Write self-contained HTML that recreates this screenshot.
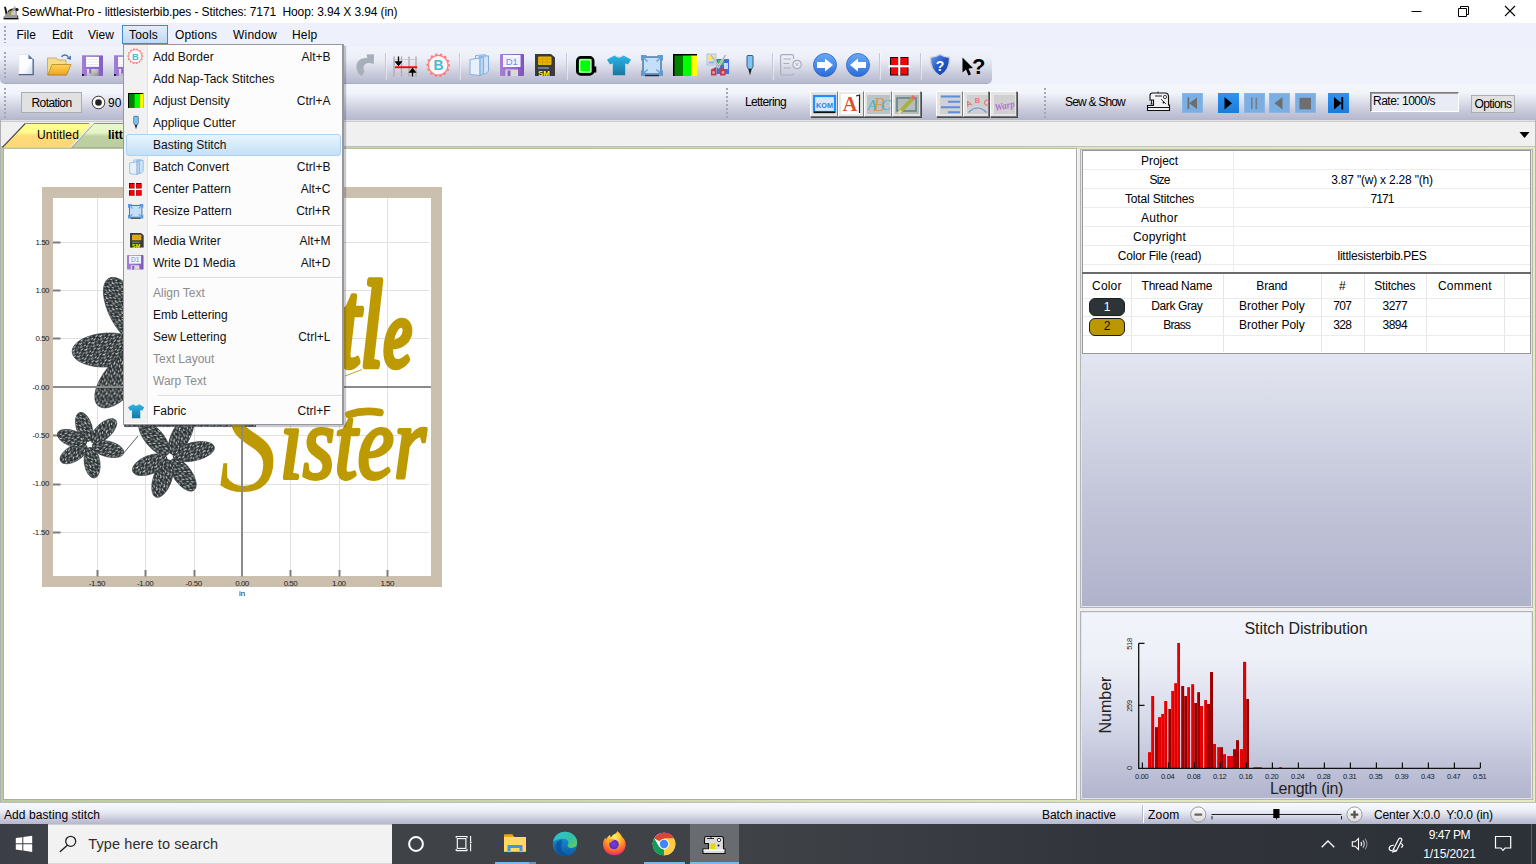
<!DOCTYPE html>
<html><head><meta charset="utf-8"><title>SewWhat-Pro</title>
<style>
*{box-sizing:border-box;margin:0;padding:0}
html,body{width:1536px;height:864px;overflow:hidden;background:#fff}
body{position:relative;font-family:"Liberation Sans",sans-serif;font-size:12px;color:#000}
.a{position:absolute}
.t{position:absolute;white-space:pre}
svg{overflow:visible}
</style></head><body>
<div class="a" style="left:0px;top:0px;width:1536px;height:23px;background:#fff"></div>
<div class="t" style="left:21.50px;letter-spacing:-0.111px;top:3.50px;font-size:12px;line-height:16px;color:#000;">SewWhat-Pro - littlesisterbib.pes - Stitches: 7171  Hoop: 3.94 X 3.94 (in)</div>
<svg class="a" style="left:2.5px;top:6px;" width="15.5" height="13.5" viewBox="0 0 15.5 13.5" preserveAspectRatio="none"><path d="M1.5 1.5Q1.5 .5 3 .8L4.5 6L9 2.5Q12 .5 14 2.500V9.500H15V12H.5V10.500L2.500 9z" fill="#9a9a9a"/><path d="M1.200 1.200Q1.800 0 2.800 1L4.200 7L2.800 8.500z" fill="#111"/><path d="M4.500 5.500Q7 2 10 3L6.500 6.500z" fill="#222"/><circle cx="14" cy="3.500" r="1.600" fill="#111"/><circle cx="11.800" cy="1" r=".9" fill="#bbb"/><rect x="6" y="4.800" width="2.500" height="3.500" fill="#a8a000"/><path d="M8.500 5.500L12.500 4.500V9H8z" fill="#c9c9c9"/><rect x=".5" y="12" width="15" height="1.400" fill="#111"/><rect x="14" y="9.500" width="1.200" height="3" fill="#444"/></svg>
<svg class="a" style="left:1400px;top:0px;" width="136" height="23" viewBox="0 0 136 23" preserveAspectRatio="none"><path d="M11.5 11.5h10" stroke="#000" stroke-width="1" fill="none"/><path d="M58.5 8.5h8v8h-8z M60.5 8.5v-2h8v8h-2" stroke="#000" stroke-width="1" fill="none"/><path d="M105 6l10 10M115 6l-10 10" stroke="#000" stroke-width="1.1" fill="none"/></svg>
<div class="a" style="left:0px;top:23px;width:1536px;height:24px;background:#eef0fb"></div>
<div class="a" style="left:4px;top:26px;width:2px;height:17px;background:repeating-linear-gradient(#a4a7b9 0,#a4a7b9 2px,transparent 2px,transparent 4px)"></div>
<div class="a" style="left:122px;top:25px;width:46px;height:19px;border:1px solid #3c8ad8;background:linear-gradient(#e4eefa,#bfd8f2)"></div>
<div class="t" style="left:16.50px;letter-spacing:0.039px;top:26.50px;font-size:12px;line-height:16px;color:#000;">File</div>
<div class="t" style="left:52.00px;letter-spacing:0.078px;top:26.50px;font-size:12px;line-height:16px;color:#000;">Edit</div>
<div class="t" style="left:88.00px;letter-spacing:0.051px;top:26.50px;font-size:12px;line-height:16px;color:#000;">View</div>
<div class="t" style="left:129.00px;letter-spacing:0.197px;top:26.50px;font-size:12px;line-height:16px;color:#000;">Tools</div>
<div class="t" style="left:175.00px;letter-spacing:0.092px;top:26.50px;font-size:12px;line-height:16px;color:#000;">Options</div>
<div class="t" style="left:233.00px;letter-spacing:0.219px;top:26.50px;font-size:12px;line-height:16px;color:#000;">Window</div>
<div class="t" style="left:292.00px;letter-spacing:0.203px;top:26.50px;font-size:12px;line-height:16px;color:#000;">Help</div>
<div class="a" style="left:0px;top:47px;width:1536px;height:37px;background:#eff1fb"></div>
<div class="a" style="left:0px;top:47px;width:992px;height:37px;border-radius:0 0 5px 5px;background:linear-gradient(#f2f4fc 0%,#eceef8 30%,#d9dbe8 55%,#c3c5d8 80%,#b7b9d0 96%,#a4a7bf 100%)"></div>
<div class="a" style="left:4px;top:52px;width:2px;height:26px;background:repeating-linear-gradient(#a4a7b9 0,#a4a7b9 2px,transparent 2px,transparent 4px)"></div>
<div class="a" style="left:0px;top:84px;width:1536px;height:36px;background:linear-gradient(#f4f6fc 0%,#f2f4fb 25%,#dfe1ec 47%,#c6c8da 75%,#b5b7cf 100%)"></div>
<div class="a" style="left:4px;top:88px;width:2px;height:30px;background:repeating-linear-gradient(#a4a7b9 0,#a4a7b9 2px,transparent 2px,transparent 4px)"></div>
<div class="a" style="left:726px;top:88px;width:2px;height:30px;background:repeating-linear-gradient(#a4a7b9 0,#a4a7b9 2px,transparent 2px,transparent 4px)"></div>
<div class="a" style="left:1044px;top:88px;width:2px;height:30px;background:repeating-linear-gradient(#a4a7b9 0,#a4a7b9 2px,transparent 2px,transparent 4px)"></div>
<div class="a" style="left:21px;top:92px;width:61px;height:21px;background:#e1e1e1;border:1px solid #adadad"></div>
<div class="t" style="left:31.50px;letter-spacing:-0.588px;top:94.50px;font-size:12px;line-height:16px;color:#000;">Rotation</div>
<svg class="a" style="left:91px;top:95px;" width="15" height="15" viewBox="0 0 15 15" preserveAspectRatio="none"><circle cx="7.5" cy="7.5" r="6.3" fill="#fff" stroke="#333" stroke-width="1"/><circle cx="7.5" cy="7.5" r="3.3" fill="#222"/></svg>
<div class="t" style="left:108.00px;top:94.50px;font-size:12px;line-height:16px;color:#000;">90</div>
<div class="t" style="left:745.00px;letter-spacing:-0.634px;top:94.00px;font-size:12px;line-height:16px;color:#000;">Lettering</div>
<div class="t" style="left:1065.00px;letter-spacing:-0.805px;top:94.00px;font-size:12px;line-height:16px;color:#000;">Sew &amp; Show</div>
<div class="a" style="left:1370px;top:92px;width:89px;height:20px;background:#e9ecf5;border:1px solid;border-color:#7a7a7a #fff #fff #7a7a7a;box-shadow:inset 1px 1px 0 #a0a0a0"></div>
<div class="t" style="left:1373.00px;letter-spacing:-0.504px;top:93.00px;font-size:12px;line-height:16px;color:#000;">Rate: 1000/s</div>
<div class="a" style="left:1471px;top:95px;width:44px;height:18px;background:#e1e1e1;border:1px solid #adadad"></div>
<div class="t" style="left:1474.50px;letter-spacing:-0.623px;top:96.00px;font-size:12px;line-height:16px;color:#000;">Options</div>
<div class="a" style="left:0px;top:120px;width:1536px;height:27px;background:#f0f0f0"></div>
<div class="a" style="left:0px;top:120px;width:1536px;height:1px;background:#e2e2e6"></div>
<div class="a" style="left:0px;top:121px;width:1536px;height:1px;background:#cbcbcb"></div>
<div class="a" style="left:0px;top:146px;width:1536px;height:657px;background:linear-gradient(90deg,#bccaa0 0%,#c6d4a8 30%,#dfe7bb 75%,#e4ecc0 100%)"></div>
<div class="a" style="left:0px;top:146px;width:1536px;height:1px;background:#bdbdbd"></div>
<div class="a" style="left:1078px;top:146px;width:458px;height:1px;background:#c4c4c4"></div>
<div class="a" style="left:0px;top:120px;width:1px;height:683px;background:#b0b0b0"></div>
<div class="a" style="left:1535px;top:120px;width:1px;height:683px;background:#b4b4b0"></div>
<div class="a" style="left:0px;top:802px;width:1536px;height:1px;background:#bdbdbd"></div>
<div class="a" style="left:3px;top:149px;width:1530px;height:651px;background:#f0f0f0"></div>
<svg class="a" style="left:0px;top:120px;" width="400" height="28" viewBox="0 0 400 28" preserveAspectRatio="none"><defs><linearGradient id="gy" x1="0" y1="0" x2="0" y2="1"><stop offset="0" stop-color="#ffff92"/><stop offset=".36" stop-color="#fffb8c"/><stop offset=".52" stop-color="#ffdb79"/><stop offset="1" stop-color="#ffd777"/></linearGradient><linearGradient id="gg" x1="0" y1="0" x2="0" y2="1"><stop offset="0" stop-color="#eaf9cc"/><stop offset=".38" stop-color="#e4f4c6"/><stop offset=".52" stop-color="#bfd0a2"/><stop offset="1" stop-color="#bccda0"/></linearGradient></defs><path d="M71.500 28 L94 3.500 L230 3.500 L250 28 Z" fill="url(#gg)" stroke="#9a9a9a" stroke-width="1"/><path d="M2.300 27.500 L25.300 3.500 L91.500 3.500 L70.500 27.500 Z" fill="url(#gy)"/><path d="M2.300 27.500 L25.300 3.500" stroke="#4c4c4c" stroke-width="1.100" fill="none"/><path d="M25 3.500H232" stroke="#8d8d8d" stroke-width="1" fill="none"/><path d="M92.500 3.500L70.500 27.500" stroke="#f4f4f4" stroke-width="1" fill="none"/><path d="M88.700 3L91.500 6L94.200 3z" fill="#f0f0f0"/></svg>
<div class="t" style="left:37.00px;letter-spacing:0.164px;top:127.00px;font-size:12px;line-height:16px;color:#000;">Untitled</div>
<div class="t" style="left:108.00px;top:127.00px;font-size:12px;line-height:16px;color:#000;font-weight:bold;">littlesisterbib.pes</div>
<svg class="a" style="left:1519px;top:131px;" width="11" height="8" viewBox="0 0 11 8" preserveAspectRatio="none"><path d="M0.5 1h10l-5 6z" fill="#000"/></svg>
<div class="a" style="left:3px;top:148px;width:1074px;height:652px;background:#fff;border:1px solid #ababab;border-top-color:#b5c4a0"></div>
<div class="a" style="left:0px;top:803px;width:1536px;height:21px;background:linear-gradient(#f6f8fd 0%,#f0f2fa 30%,#d9dbe8 60%,#c0c2d6 85%,#b5b7cf 100%)"></div>
<div class="t" style="left:4.00px;letter-spacing:0.070px;top:807.00px;font-size:12px;line-height:16px;color:#000;">Add basting stitch</div>
<div class="t" style="left:1042.00px;letter-spacing:-0.051px;top:807.00px;font-size:12px;line-height:16px;color:#000;">Batch inactive</div>
<div class="a" style="left:1143px;top:805px;width:1px;height:18px;background:#fff;box-shadow:-1px 0 0 #b5b8cc"></div>
<div class="t" style="left:1148.00px;letter-spacing:0.203px;top:807.00px;font-size:12px;line-height:16px;color:#000;">Zoom</div>
<div class="t" style="left:1374.00px;letter-spacing:-0.119px;top:807.00px;font-size:12px;line-height:16px;color:#000;">Center X:0.0  Y:0.0 (in)</div>
<svg class="a" style="left:1188px;top:804px;" width="180" height="21" viewBox="0 0 180 21" preserveAspectRatio="none"><defs><linearGradient id="zb" x1="0" y1="0" x2="0" y2="1"><stop offset="0" stop-color="#fff"/><stop offset="1" stop-color="#d8d8d8"/></linearGradient></defs><circle cx="10.3" cy="10.5" r="7.6" fill="url(#zb)" stroke="#9a9a9a" stroke-width="1"/><rect x="6.3" y="9.4" width="8" height="2.4" rx="1" fill="#666"/><circle cx="166.5" cy="10.5" r="7.6" fill="url(#zb)" stroke="#9a9a9a" stroke-width="1"/><rect x="162.5" y="9.4" width="8" height="2.4" rx="1" fill="#555"/><rect x="165.3" y="6.5" width="2.4" height="8" rx="1" fill="#555"/><path d="M23.5 10.500h130" stroke="#222" stroke-width="1"/><path d="M24 12v3.5M88.5 12v3.5M153.5 12v3.5" stroke="#222" stroke-width="1"/><rect x="85.3" y="5" width="6.2" height="9" fill="#000"/></svg>
<svg class="a" style="left:18px;top:54px;" width="16" height="21" viewBox="0 0 16 21" preserveAspectRatio="none"><defs><linearGradient id="nd" x1="0" y1="0" x2="1" y2="1"><stop offset="0" stop-color="#fff"/><stop offset=".6" stop-color="#fafbfe"/><stop offset="1" stop-color="#c9d5ea"/></linearGradient></defs><path d="M.8 .5H10.500L15 5V20.300H.8z" fill="url(#nd)" stroke="#d5dbe8" stroke-width=".6"/><path d="M15.200 5V20.600H.8" fill="none" stroke="#4c6488" stroke-width="1.300"/><path d="M10.500 .5V5H15z" fill="#5d7599"/></svg>
<svg class="a" style="left:47px;top:54px;" width="24" height="21" viewBox="0 0 24 21" preserveAspectRatio="none"><defs><linearGradient id="of" x1="0" y1="0" x2="0" y2="1"><stop offset="0" stop-color="#ffd35a"/><stop offset="1" stop-color="#f0a31d"/></linearGradient></defs><path d="M.5 4H9.500L11 6H19V21H.5z" fill="#f6dc85" stroke="#b9a36a" stroke-width=".8"/><path d="M5 10.500H24L19.500 21H.8z" fill="url(#of)" stroke="#a87c1b" stroke-width=".7"/><path d="M14.500 3C16 .3 20 .3 21.500 3.500" fill="none" stroke="#4f7ab0" stroke-width="1.400"/><path d="M19.500 4.500L24 1.500V6z" fill="#4f7ab0"/></svg>
<svg class="a" style="left:82px;top:55px;" width="21" height="21" viewBox="0 0 21 21" preserveAspectRatio="none"><defs><linearGradient id="pf2" x1="0" y1="0" x2="1" y2="0"><stop offset="0" stop-color="#a07fd6"/><stop offset=".5" stop-color="#8f6bcb"/><stop offset="1" stop-color="#8261c2"/></linearGradient><linearGradient id="mt" x1="0" y1="0" x2="1" y2="1"><stop offset="0" stop-color="#f2f2f2"/><stop offset="1" stop-color="#8e8e8e"/></linearGradient></defs><rect x="0" y="0" width="21" height="21" rx=".8" fill="url(#pf2)"/><rect x="0" y="0" width="21" height="1" fill="#b79ce2"/><rect x="4" y="1.800" width="13" height="10" fill="#fff"/><path d="M4 4.500H17M4 7H17M4 9.500H17" stroke="#dcdcdc" stroke-width=".6"/><rect x="5" y="14" width="11.500" height="7" fill="url(#mt)"/><rect x="7.200" y="14" width="2.200" height="4.500" fill="#8a66c8"/><rect x="0" y="19" width="2" height="2" fill="#222"/></svg>
<svg class="a" style="left:114px;top:55px;" width="21" height="21" viewBox="0 0 21 21" preserveAspectRatio="none"><defs><linearGradient id="pf2" x1="0" y1="0" x2="1" y2="0"><stop offset="0" stop-color="#a07fd6"/><stop offset=".5" stop-color="#8f6bcb"/><stop offset="1" stop-color="#8261c2"/></linearGradient><linearGradient id="mt" x1="0" y1="0" x2="1" y2="1"><stop offset="0" stop-color="#f2f2f2"/><stop offset="1" stop-color="#8e8e8e"/></linearGradient></defs><rect x="0" y="0" width="21" height="21" rx=".8" fill="url(#pf2)"/><rect x="0" y="0" width="21" height="1" fill="#b79ce2"/><rect x="4" y="1.800" width="13" height="10" fill="#fff"/><path d="M4 4.500H17M4 7H17M4 9.500H17" stroke="#dcdcdc" stroke-width=".6"/><rect x="5" y="14" width="11.500" height="7" fill="url(#mt)"/><rect x="7.200" y="14" width="2.200" height="4.500" fill="#8a66c8"/><rect x="0" y="19" width="2" height="2" fill="#222"/></svg>
<svg class="a" style="left:354px;top:54px;" width="20" height="22" viewBox="0 0 20 21" preserveAspectRatio="none"><path d="M12.500 .500L20 .300L19.800 9.500L16.500 8.800C11 7.500 8 11.500 10.500 17L7.500 21C-1 14.500 1.500 3 13.300 3.800z" fill="#a9aebb"/></svg>
<div class="a" style="left:384.5px;top:53px;width:1px;height:27px;background:#c6c8d8"></div>
<div class="a" style="left:385.5px;top:53px;width:1px;height:27px;background:rgba(255,255,255,.45)"></div>
<svg class="a" style="left:393px;top:55.5px;" width="24" height="21" viewBox="0 0 24 21" preserveAspectRatio="none"><path d="M1 .5V20.500M8.500 .5V20.500M16 .5V20.500M23 .5V20.500" stroke="#a8a8a8" stroke-width="1.300"/><path d="M1 3.500H23M1 17.500H23" stroke="#c4c4c4" stroke-width=".8"/><rect x="2" y="10.300" width="22" height="1.900" fill="#ff0000"/><path d="M5.500 .5V6M2.800 6H8.200L5.500 9.300zM19.500 20.500V16M16.800 16H22.200L19.500 12.700z" stroke="#000" stroke-width="1.300" fill="#000"/></svg>
<svg class="a" style="left:426px;top:53px;" width="24.5" height="24.5" viewBox="0 0 24 24" preserveAspectRatio="none"><circle cx="12" cy="12" r="10.400" fill="none" stroke="#f78383" stroke-width="2.600" stroke-linecap="round" stroke-dasharray="0.100 4.570"/><circle cx="12" cy="12" r="9.600" fill="#fbf6f8" stroke="#f78383" stroke-width="1.300"/><text x="12.200" y="17" font-family="'Liberation Sans',sans-serif" font-weight="bold" font-size="13.500" text-anchor="middle" fill="#3fbfd2">B</text></svg>
<div class="a" style="left:458.5px;top:53px;width:1px;height:27px;background:#c6c8d8"></div>
<div class="a" style="left:459.5px;top:53px;width:1px;height:27px;background:rgba(255,255,255,.45)"></div>
<svg class="a" style="left:469px;top:54px;" width="20" height="22" viewBox="0 0 20 22" preserveAspectRatio="none"><g stroke="#7aa7d9" stroke-width=".9"><path d="M6.500 1.500L16.500 .8V18L6.500 18.800z" fill="#dfeefb"/><path d="M10 2.500L19.500 1.800V17L16.500 20L10 19.500z" fill="#cfe4f8"/><path d="M1 5.500L11 4V21.500L1 20.500z" fill="#e6f1fc"/><path d="M11 4L14.500 3V19.500L11 21.500z" fill="#b8d4f0"/></g></svg>
<svg class="a" style="left:500px;top:54px;" width="24" height="22" viewBox="0 0 24 22" preserveAspectRatio="none"><defs><linearGradient id="pf" x1="0" y1="0" x2="1" y2="0"><stop offset="0" stop-color="#a47fd6"/><stop offset=".5" stop-color="#9a6ccf"/><stop offset="1" stop-color="#7e54b8"/></linearGradient></defs><rect x="0" y="0" width="24" height="22" rx="1" fill="url(#pf)"/><rect x="3" y="1" width="17.500" height="12" fill="#f6f8ff"/><path d="M3 4H20.500M3 7H20.500M3 10H20.500" stroke="#d5daf0" stroke-width=".6"/><text x="11.800" y="10.500" font-family="'Liberation Sans',sans-serif" font-size="9.500" text-anchor="middle" fill="#6f90d8">D1</text><rect x="5.500" y="15.500" width="12.500" height="6.500" fill="#d9d9d9"/><rect x="7.500" y="16.500" width="3" height="5.500" fill="#8b62c4"/></svg>
<svg class="a" style="left:535px;top:54px;" width="20" height="22" viewBox="0 0 20 22" preserveAspectRatio="none"><path d="M0 0H16L20 3.500V22H0z" fill="#3b3b3b"/><rect x="3" y="2.500" width="13.500" height="8.500" rx="1" fill="#e9b500"/><path d="M3 5.300H16.500M3 8.200H16.500M7.500 2.500V11M12 2.500V11" stroke="#c99700" stroke-width=".7"/><rect x="3" y="13" width="11" height="2" fill="#6a7c90"/><rect x="2" y="17" width="14" height="5" fill="#2a2a2a"/><text x="9" y="22" font-family="'Liberation Sans',sans-serif" font-weight="bold" font-size="7" text-anchor="middle" fill="#ffff00" textLength="12" lengthAdjust="spacingAndGlyphs">SM</text></svg>
<div class="a" style="left:565.5px;top:53px;width:1px;height:27px;background:#c6c8d8"></div>
<div class="a" style="left:566.5px;top:53px;width:1px;height:27px;background:rgba(255,255,255,.45)"></div>
<svg class="a" style="left:576px;top:55.6px;" width="20.3" height="19.8" viewBox="0 0 20.3 19.8" preserveAspectRatio="none"><rect x="1.400" y="1.400" width="15.700" height="17" rx="3.500" fill="#00ff00" stroke="#000" stroke-width="2.800"/><rect x="3.800" y="3.800" width="11" height="12.200" fill="none" stroke="#fff" stroke-width="1"/><rect x="17" y="10.500" width="3.300" height="6" fill="#000"/></svg>
<svg class="a" style="left:607px;top:55px;" width="24" height="20.5" viewBox="0 0 24 20.5" preserveAspectRatio="none"><defs><linearGradient id="ts" x1="0" y1="0" x2="0" y2="1"><stop offset="0" stop-color="#2db4ea"/><stop offset="1" stop-color="#16789c"/></linearGradient></defs><path d="M7.500 .5Q12 3.500 16.500 .5L24 4.500L21 9.500L18.200 8.300V20.300H5.800V8.300L3 9.500L0 4.500z" fill="url(#ts)"/><path d="M7.500 .5Q12 4.800 16.500 .5L15.300 .2Q12 3 8.700 .2z" fill="#d9dee2"/></svg>
<svg class="a" style="left:641px;top:55px;" width="22" height="21" viewBox="0 0 22 21" preserveAspectRatio="none"><defs><pattern id="chk" width="3" height="3" patternUnits="userSpaceOnUse"><rect width="3" height="3" fill="#cfe6fc"/><rect width="1.500" height="1.500" fill="#b9d9f8"/><rect x="1.500" y="1.500" width="1.500" height="1.500" fill="#b9d9f8"/></pattern></defs><rect x="2" y="2" width="18" height="17" fill="url(#chk)" stroke="#2f5f94" stroke-width="1.200"/><path d="M0 0H6L0 6zM22 0H16L22 6zM0 21H6L0 15zM22 21H16L22 15z" fill="#5b9bd8"/><path d="M3 3L6.500 6.500M19 3L15.500 6.500M3 18L6.500 14.500M19 18L15.500 14.500" stroke="#6aa5de" stroke-width="1.600"/><path d="M4 20.600H18" stroke="#1c2a3c" stroke-width="1.300"/></svg>
<svg class="a" style="left:673px;top:54px;" width="24" height="22" viewBox="0 0 24 22" preserveAspectRatio="none"><rect x="0" y="0" width="24" height="22" fill="#000"/><rect x="1.500" y="1.500" width="8.500" height="20.500" fill="#008000"/><rect x="10" y="1.500" width="8" height="20.500" fill="#00ff00"/><rect x="18" y="1.500" width="6" height="20.500" fill="#ffff00"/></svg>
<svg class="a" style="left:707px;top:54px;" width="22.5" height="22" viewBox="0 0 22.5 22" preserveAspectRatio="none"><rect x="0" y="0" width="9" height="11" fill="#dbe6f5" stroke="#8aa4c8" stroke-width=".6"/><rect x="1.500" y="1.500" width="6" height="5" fill="#ffe43a"/><rect x="1.500" y="7.500" width="6" height="2" fill="#7fb3e8"/><rect x="9.500" y="5" width="12.500" height="15" fill="#3f6fd0"/><rect x="11" y="6" width="6" height="5" fill="#32c25a"/><rect x="17" y="9" width="4" height="6" fill="#c8d8f0"/><path d="M4 1L12.500 14M18.500 1L10.500 14" stroke="#d8d8d8" stroke-width="2.300"/><path d="M4 1L12.500 14M18.500 1L10.500 14" stroke="#8c8c8c" stroke-width=".6"/><path d="M9 13L4 15.500V21.500H9.500zM13.500 13L18.500 15.500V21.500H13z" fill="#c83848"/><circle cx="6.500" cy="18.500" r="1.400" fill="#e89aa4"/><circle cx="16" cy="18.500" r="1.400" fill="#e89aa4"/></svg>
<svg class="a" style="left:745.5px;top:54.5px;" width="8" height="21" viewBox="0 0 8 21" preserveAspectRatio="none"><path d="M1 1.200Q1 .5 1.800 .5H6.200Q7 .5 7 1.200V11.500L5.500 14H2.500L1 11.500z" fill="#7fc4f8" stroke="#41586e" stroke-width="1"/><path d="M2.300 14H5.700L4 20.500z" fill="#222"/></svg>
<div class="a" style="left:772.0px;top:53px;width:1px;height:27px;background:#c6c8d8"></div>
<div class="a" style="left:773.0px;top:53px;width:1px;height:27px;background:rgba(255,255,255,.45)"></div>
<svg class="a" style="left:780px;top:54px;" width="22" height="22" viewBox="0 0 22 22" preserveAspectRatio="none"><g fill="none" stroke="#a9adbb" stroke-width="1.200"><path d="M13.500 19.500Q13.500 21 12 21H2Q.600 21 .600 19.500V2Q.600 .600 2 .600H12Q13.500 .600 13.500 2V5"/><path d="M3.500 5H11M3.500 9.500H9.500M3.500 14H11"/><circle cx="17" cy="10.500" r="4.200" fill="#e9ebf3"/><path d="M15.500 9L18.500 12M18.500 9L15.500 12" stroke-width=".9"/></g></svg>
<svg class="a" style="left:813.4px;top:52.7px;" width="24" height="24" viewBox="0 0 24 24" preserveAspectRatio="none"><defs><linearGradient id="ba" x1="0" y1="0" x2="0" y2="1"><stop offset="0" stop-color="#6aa9f4"/><stop offset=".5" stop-color="#4a8deb"/><stop offset="1" stop-color="#2a6bd4"/></linearGradient></defs><circle cx="12" cy="12" r="11.500" fill="url(#ba)" stroke="#2f65c0" stroke-width=".8"/><path d="M4 9H12V5.500L20 12L12 18.500V15H4z" fill="#fff"/></svg>
<svg class="a" style="left:846px;top:52.7px;" width="24" height="24" viewBox="0 0 24 24" preserveAspectRatio="none"><defs><linearGradient id="bb" x1="0" y1="0" x2="0" y2="1"><stop offset="0" stop-color="#6aa9f4"/><stop offset=".5" stop-color="#4a8deb"/><stop offset="1" stop-color="#2a6bd4"/></linearGradient></defs><circle cx="12" cy="12" r="11.500" fill="url(#bb)" stroke="#2f65c0" stroke-width=".8"/><path d="M4 9H12V5.500L20 12L12 18.500V15H4z" fill="#fff" transform="translate(24 0) scale(-1 1)"/></svg>
<div class="a" style="left:879.0px;top:53px;width:1px;height:27px;background:#c6c8d8"></div>
<div class="a" style="left:880.0px;top:53px;width:1px;height:27px;background:rgba(255,255,255,.45)"></div>
<svg class="a" style="left:889.5px;top:57px;" width="18.5" height="18.5" viewBox="0 0 18.5 18.5" preserveAspectRatio="none"><rect x="0" y="0" width="18.500" height="18.500" fill="#111"/><rect x="1" y="1" width="7" height="7" fill="#ff0000"/><rect x="10.500" y="1" width="7" height="7" fill="#ff0000"/><rect x="1" y="10.500" width="7" height="7" fill="#ff0000"/><rect x="10.500" y="10.500" width="7" height="7" fill="#ff0000"/><rect x="8.200" y="0" width="2.100" height="18.500" fill="#fff"/><rect x="-1.500" y="8.100" width="21.500" height="2.300" fill="#fff"/></svg>
<div class="a" style="left:920.0px;top:53px;width:1px;height:27px;background:#c6c8d8"></div>
<div class="a" style="left:921.0px;top:53px;width:1px;height:27px;background:rgba(255,255,255,.45)"></div>
<svg class="a" style="left:930px;top:54px;" width="20" height="22.5" viewBox="0 0 20 22.5" preserveAspectRatio="none"><defs><linearGradient id="sh" x1="0" y1="0" x2="1" y2="1"><stop offset="0" stop-color="#6ea0ea"/><stop offset=".5" stop-color="#2456c8"/><stop offset="1" stop-color="#123a9c"/></linearGradient></defs><path d="M10 .5C13 2.500 16 3.300 19.500 3.300C19.800 12 17 18.500 10 22C3 18.500 .200 12 .500 3.300C4 3.300 7 2.500 10 .5z" fill="url(#sh)" stroke="#c9ced8" stroke-width="1.300"/><text x="10" y="16.500" font-family="'Liberation Sans',sans-serif" font-weight="bold" font-size="14" text-anchor="middle" fill="#fff">?</text></svg>
<svg class="a" style="left:962px;top:56.5px;" width="23" height="19.5" viewBox="0 0 23 19.5" preserveAspectRatio="none"><path d="M.5 .5L.5 15.500L4 12.500L6.500 18.500L9 17.300L6.500 11.500L11 11z" fill="#000"/><text x="16.800" y="16.500" font-family="'Liberation Sans',sans-serif" font-weight="bold" font-size="22" text-anchor="middle" fill="#000">?</text></svg>
<div class="a" style="left:809.5px;top:91px;width:28px;height:25.5px;background:#e4e4e4;border:1px solid;border-color:#fff #7a7a7a #7a7a7a #fff;box-shadow:1px 1px 0 #4a4a4a"></div>
<div class="a" style="left:837.5px;top:91px;width:26px;height:25.5px;background:#e9e9e9;border:1px solid;border-color:#fff #7a7a7a #7a7a7a #fff;box-shadow:1px 1px 0 #4a4a4a"></div>
<div class="a" style="left:863.5px;top:91px;width:28px;height:25.5px;background:#e4e4e4;border:1px solid;border-color:#fff #7a7a7a #7a7a7a #fff;box-shadow:1px 1px 0 #4a4a4a"></div>
<div class="a" style="left:891.5px;top:91px;width:29px;height:25.5px;background:#e4e4e4;border:1px solid;border-color:#fff #7a7a7a #7a7a7a #fff;box-shadow:1px 1px 0 #4a4a4a"></div>
<svg class="a" style="left:813px;top:95px;" width="23" height="19" viewBox="0 0 23 19" preserveAspectRatio="none"><rect x="1" y="1" width="21" height="16" fill="#d8e8fb" stroke="#1e8fff" stroke-width="2.200"/><rect x="1" y="16.500" width="21" height="1.600" fill="#111"/><text x="11.500" y="13" font-family="'Liberation Sans',sans-serif" font-weight="bold" font-size="8" text-anchor="middle" fill="#2d7fe0" textLength="17" lengthAdjust="spacingAndGlyphs">KOM</text></svg>
<svg class="a" style="left:841px;top:94px;" width="21" height="21" viewBox="0 0 21 21" preserveAspectRatio="none"><rect x="0" y="0" width="19" height="20" fill="#fff"/><text x="9" y="17" font-family="'Liberation Serif',serif" font-weight="bold" font-size="20" text-anchor="middle" fill="#e0502c">A</text><path d="M15 2L18.500 1V19" fill="none" stroke="#222" stroke-width="1.200"/></svg>
<svg class="a" style="left:867px;top:95px;" width="23" height="19" viewBox="0 0 23 19" preserveAspectRatio="none"><rect x="0" y="0" width="23" height="19" fill="#b9c4c8"/><text x="5" y="15" font-family="'Liberation Serif',serif" font-style="italic" font-size="15" text-anchor="middle" fill="#4ab0c8">A</text><text x="12" y="16" font-family="'Liberation Serif',serif" font-style="italic" font-size="19" text-anchor="middle" fill="#e0964a">B</text><text x="19" y="15" font-family="'Liberation Serif',serif" font-style="italic" font-size="15" text-anchor="middle" fill="#4ab0c8">C</text></svg>
<svg class="a" style="left:895px;top:95px;" width="24" height="19" viewBox="0 0 24 19" preserveAspectRatio="none"><rect x="0" y="0" width="24" height="19" fill="#b4bcbc"/><rect x="2" y="3" width="19" height="13" fill="none" stroke="#5f7f86" stroke-width="1.500"/><path d="M5 17L18 3" stroke="#a9b23a" stroke-width="4"/><path d="M17 4L19.500 1.500" stroke="#e86a6a" stroke-width="4"/><path d="M3.500 18.500L6 15.500" stroke="#e8d9a0" stroke-width="3"/></svg>
<div class="a" style="left:936px;top:91px;width:27px;height:25.5px;background:#e4e4e4;border:1px solid;border-color:#fff #7a7a7a #7a7a7a #fff;box-shadow:1px 1px 0 #4a4a4a"></div>
<div class="a" style="left:963px;top:91px;width:26px;height:25.5px;background:#e4e4e4;border:1px solid;border-color:#fff #7a7a7a #7a7a7a #fff;box-shadow:1px 1px 0 #4a4a4a"></div>
<div class="a" style="left:989.5px;top:91px;width:27px;height:25.5px;background:#e4e4e4;border:1px solid;border-color:#fff #7a7a7a #7a7a7a #fff;box-shadow:1px 1px 0 #4a4a4a"></div>
<svg class="a" style="left:940px;top:95px;" width="21" height="19" viewBox="0 0 21 19" preserveAspectRatio="none"><rect x="0" y="0" width="21" height="19" fill="#d2d2d2"/><path d="M1 1.500H20M8 6.800H20M1 12.200H20M8 17.300H20" stroke="#5b8fe0" stroke-width="1.900"/></svg>
<svg class="a" style="left:966.5px;top:95px;" width="21" height="19" viewBox="0 0 21 19" preserveAspectRatio="none"><rect x="0" y="0" width="21" height="19" fill="#d0d0d0"/><text x="3" y="11" font-family="'Liberation Sans',sans-serif" font-size="8" text-anchor="middle" fill="#e05a5a" transform="rotate(-25 3 11)">A</text><text x="10.500" y="7.500" font-family="'Liberation Sans',sans-serif" font-size="8" text-anchor="middle" fill="#e05a5a">B</text><text x="18.500" y="10" font-family="'Liberation Sans',sans-serif" font-size="8" text-anchor="middle" fill="#e05a5a" transform="rotate(25 18.500 10)">C</text><path d="M1.500 17.500Q10.500 8.500 19.500 17.500" fill="none" stroke="#6a8fe0" stroke-width="1.100"/></svg>
<svg class="a" style="left:993.5px;top:95px;" width="21" height="19" viewBox="0 0 21 19" preserveAspectRatio="none"><rect x="0" y="0" width="21" height="19" fill="#d0d0d0"/><text x="10.500" y="14" font-family="'Liberation Serif',serif" font-style="italic" font-weight="bold" font-size="10" text-anchor="middle" fill="#b66fd0" transform="rotate(-12 10.500 10)" textLength="20" lengthAdjust="spacingAndGlyphs">Warp</text></svg>
<svg class="a" style="left:1146.5px;top:91.5px;" width="23" height="19.5" viewBox="0 0 23 19.5" preserveAspectRatio="none"><path d="M3 3.500Q3 1 5.500 1H18Q21.500 1 21.500 4.500V13H22.500V18.500H.500V13.500H6.500V8H3z" fill="#f1f1f1" stroke="#111" stroke-width="1.100"/><path d="M.500 15.500H22.500" stroke="#111" stroke-width="1"/><path d="M4.500 8V12M3.500 12H5.500M8 4H15M11 1V-.500" stroke="#111" stroke-width=".9"/><circle cx="18" cy="5" r="1.600" fill="#fff" stroke="#111" stroke-width=".8"/><circle cx="16.500" cy="10.500" r="1" fill="#111"/><path d="M14 7L19 12" stroke="#111" stroke-width=".8"/></svg>
<div class="a" style="left:1182px;top:92.5px;width:20.5px;height:20.5px;background:#7baee3;border:1px solid #8ab7e6;"></div>
<svg class="a" style="left:1182px;top:92.5px;" width="20.5" height="20.5" viewBox="0 0 20.5 20.5" preserveAspectRatio="none"><rect x="5.500" y="4.500" width="1.800" height="11.500" fill="#6e6e6e"/><path d="M15 4.500V16L7 10.250z" fill="#6e6e6e"/></svg>
<div class="a" style="left:1218px;top:92.5px;width:20.5px;height:20.5px;background:linear-gradient(#2f93f5,#1b7bd8);"></div>
<svg class="a" style="left:1218px;top:92.5px;" width="20.5" height="20.5" viewBox="0 0 20.5 20.5" preserveAspectRatio="none"><path d="M6.500 4V16.500L14 10.250z" fill="#000"/></svg>
<div class="a" style="left:1244px;top:92.5px;width:20.5px;height:20.5px;background:#7baee3;border:1px solid #8ab7e6;"></div>
<svg class="a" style="left:1244px;top:92.5px;" width="20.5" height="20.5" viewBox="0 0 20.5 20.5" preserveAspectRatio="none"><rect x="7" y="4.500" width="1.600" height="11.500" fill="#6e6e6e" opacity=".75"/><rect x="11.500" y="4.500" width="1.600" height="11.500" fill="#6e6e6e" opacity=".75"/></svg>
<div class="a" style="left:1269px;top:92.5px;width:20.5px;height:20.5px;background:#7baee3;border:1px solid #8ab7e6;"></div>
<svg class="a" style="left:1269px;top:92.5px;" width="20.5" height="20.5" viewBox="0 0 20.5 20.5" preserveAspectRatio="none"><path d="M13.500 4V16.500L5.500 10.250z" fill="#6e6e6e"/></svg>
<div class="a" style="left:1295px;top:92.5px;width:20.5px;height:20.5px;background:#7baee3;border:1px solid #8ab7e6;"></div>
<svg class="a" style="left:1295px;top:92.5px;" width="20.5" height="20.5" viewBox="0 0 20.5 20.5" preserveAspectRatio="none"><rect x="4.500" y="4.800" width="11.500" height="11.500" fill="#6e6e6e"/></svg>
<div class="a" style="left:1328px;top:92.5px;width:20.5px;height:20.5px;background:linear-gradient(#2f93f5,#1b7bd8);"></div>
<svg class="a" style="left:1328px;top:92.5px;" width="20.5" height="20.5" viewBox="0 0 20.5 20.5" preserveAspectRatio="none"><path d="M6 4V16.500L13.500 10.250z" fill="#000"/><rect x="13.300" y="4" width="1.900" height="12.500" fill="#000"/></svg>
<div class="a" style="left:42px;top:187px;width:400px;height:400px;background:#cbbfae"></div>
<div class="a" style="left:53px;top:198px;width:378px;height:378px;background:#fff"></div>
<svg class="a" style="left:0px;top:0px;" width="1078" height="803" viewBox="0 0 1078 803" preserveAspectRatio="none"><path d="M97.5 198V576" stroke="#e0e0e0" stroke-width="1"/><path d="M145.5 198V576" stroke="#e0e0e0" stroke-width="1"/><path d="M194.5 198V576" stroke="#e0e0e0" stroke-width="1"/><path d="M290.5 198V576" stroke="#e0e0e0" stroke-width="1"/><path d="M339.5 198V576" stroke="#e0e0e0" stroke-width="1"/><path d="M387.5 198V576" stroke="#e0e0e0" stroke-width="1"/><path d="M53 242.5H429" stroke="#e0e0e0" stroke-width="1"/><path d="M53 290.5H429" stroke="#e0e0e0" stroke-width="1"/><path d="M53 338.5H429" stroke="#e0e0e0" stroke-width="1"/><path d="M53 435.5H429" stroke="#e0e0e0" stroke-width="1"/><path d="M53 484.5H429" stroke="#e0e0e0" stroke-width="1"/><path d="M53 532.5H429" stroke="#e0e0e0" stroke-width="1"/><path d="M97.5 570V576.5" stroke="#7d7d7d" stroke-width="2"/><path d="M145.5 570V576.5" stroke="#7d7d7d" stroke-width="2"/><path d="M194.5 570V576.5" stroke="#7d7d7d" stroke-width="2"/><path d="M290.5 570V576.5" stroke="#7d7d7d" stroke-width="2"/><path d="M339.5 570V576.5" stroke="#7d7d7d" stroke-width="2"/><path d="M387.5 570V576.5" stroke="#7d7d7d" stroke-width="2"/><path d="M242.0 570V576.5" stroke="#7d7d7d" stroke-width="2"/><path d="M53 242.5H60.5" stroke="#7d7d7d" stroke-width="2"/><path d="M53 290.5H60.5" stroke="#7d7d7d" stroke-width="2"/><path d="M53 338.5H60.5" stroke="#7d7d7d" stroke-width="2"/><path d="M53 435.5H60.5" stroke="#7d7d7d" stroke-width="2"/><path d="M53 484.5H60.5" stroke="#7d7d7d" stroke-width="2"/><path d="M53 532.5H60.5" stroke="#7d7d7d" stroke-width="2"/><path d="M53 387.0H60.5" stroke="#7d7d7d" stroke-width="2"/><defs><pattern id="stitch" width="10" height="8" patternUnits="userSpaceOnUse" patternTransform="rotate(-40)"><rect width="10" height="8" fill="#2b3234"/><rect x="0.300" y="0.800" width="3" height="0.900" fill="#fff" opacity=".9"/><rect x="5" y="0.200" width="1.600" height="0.800" fill="#fff" opacity=".8"/><rect x="6.500" y="2.200" width="3" height="0.900" fill="#fff" opacity=".9"/><rect x="2" y="3.200" width="2.400" height="0.900" fill="#fff" opacity=".85"/><rect x="5.200" y="4.600" width="3" height="0.900" fill="#fff" opacity=".9"/><rect x="0.500" y="5.600" width="2" height="0.800" fill="#fff" opacity=".8"/><rect x="8" y="6.400" width="1.800" height="0.800" fill="#fff" opacity=".8"/><rect x="3.200" y="6.900" width="3" height="0.900" fill="#fff" opacity=".9"/></pattern></defs><g fill="url(#stitch)" stroke="#2e3537" stroke-width="0.6"><ellipse cx="41.5" cy="0" rx="37.5" ry="17.0" transform="translate(146 348) rotate(-118)"/><ellipse cx="39.0" cy="0" rx="35.0" ry="17.0" transform="translate(146 348) rotate(177)"/><ellipse cx="39.5" cy="0" rx="35.5" ry="17.0" transform="translate(146 348) rotate(129.5)"/><ellipse cx="40.0" cy="0" rx="36.0" ry="17.0" transform="translate(146 348) rotate(-60)"/><ellipse cx="40.0" cy="0" rx="36.0" ry="17.0" transform="translate(146 348) rotate(0)"/><ellipse cx="40.0" cy="0" rx="36.0" ry="17.0" transform="translate(146 348) rotate(60)"/></g><circle cx="146" cy="348" r="3" fill="#fff"/><g fill="url(#stitch)" stroke="#2e3537" stroke-width="0.6"><ellipse cx="18.2" cy="0" rx="15.2" ry="7.8" transform="translate(89.4 444.4) rotate(-107)"/><ellipse cx="19.4" cy="0" rx="16.4" ry="7.8" transform="translate(89.4 444.4) rotate(-43)"/><ellipse cx="19.2" cy="0" rx="16.2" ry="7.8" transform="translate(89.4 444.4) rotate(14)"/><ellipse cx="18.5" cy="0" rx="15.5" ry="7.8" transform="translate(89.4 444.4) rotate(81.5)"/><ellipse cx="18.2" cy="0" rx="15.2" ry="7.8" transform="translate(89.4 444.4) rotate(149.6)"/><ellipse cx="18.4" cy="0" rx="15.4" ry="7.8" transform="translate(89.4 444.4) rotate(199.5)"/></g><circle cx="89.4" cy="444.4" r="2" fill="#fff"/><g fill="url(#stitch)" stroke="#2e3537" stroke-width="0.6"><ellipse cx="24.5" cy="0" rx="21.5" ry="9.2" transform="translate(170 456.9) rotate(-130)"/><ellipse cx="24.5" cy="0" rx="21.5" ry="9.2" transform="translate(170 456.9) rotate(-63)"/><ellipse cx="24.2" cy="0" rx="21.2" ry="9.2" transform="translate(170 456.9) rotate(-12.7)"/><ellipse cx="22.0" cy="0" rx="19.0" ry="9.2" transform="translate(170 456.9) rotate(54.3)"/><ellipse cx="22.8" cy="0" rx="19.8" ry="9.2" transform="translate(170 456.9) rotate(109)"/><ellipse cx="21.5" cy="0" rx="18.5" ry="9.2" transform="translate(170 456.9) rotate(158.7)"/></g><circle cx="170" cy="456.9" r="2.6" fill="#fff"/><path d="M123.7 453L138 436" stroke="#2e3537" stroke-width="0.8"/><rect x="124" y="422" width="132" height="4.800" fill="url(#stitch)"/><path d="M345 376L362 369.500" stroke="#be9a02" stroke-width="0.9"/><g fill="#be9a02" stroke="#be9a02" stroke-linejoin="round" stroke-linecap="round" font-family="'Liberation Serif',serif" font-style="italic"><text transform="translate(219 491) scale(.79 1)" stroke-width="3.800"><tspan font-size="150" stroke-width="0">S</tspan><tspan font-size="104" dx="2" dy="-13">ister</tspan></text><text transform="translate(271 366) scale(.66 1)" stroke-width="6.500"><tspan font-size="122">littl</tspan><tspan font-size="96" dx="1">e</tspan></text><path d="M349 414.500Q364 409.500 380 412.500" fill="none" stroke-width="7.500"/></g><path d="M242 198V576" stroke="#8a8a8a" stroke-width="2"/><path d="M53 387H431" stroke="#8a8a8a" stroke-width="2"/></svg>
<div class="t" style="left:35.50px;letter-spacing:-0.520px;top:236.50px;font-size:8px;line-height:12px;color:#222;">1.50</div>
<div class="t" style="left:35.50px;letter-spacing:-0.520px;top:284.80px;font-size:8px;line-height:12px;color:#222;">1.00</div>
<div class="t" style="left:35.50px;letter-spacing:-0.520px;top:333.20px;font-size:8px;line-height:12px;color:#222;">0.50</div>
<div class="t" style="left:32.50px;letter-spacing:-0.347px;top:381.50px;font-size:8px;line-height:12px;color:#222;">-0.00</div>
<div class="t" style="left:32.50px;letter-spacing:-0.347px;top:429.90px;font-size:8px;line-height:12px;color:#222;">-0.50</div>
<div class="t" style="left:32.50px;letter-spacing:-0.347px;top:478.30px;font-size:8px;line-height:12px;color:#222;">-1.00</div>
<div class="t" style="left:32.50px;letter-spacing:-0.347px;top:526.70px;font-size:8px;line-height:12px;color:#222;">-1.50</div>
<div class="t" style="left:88.65px;letter-spacing:-0.347px;top:577.50px;font-size:8px;line-height:12px;color:#222;">-1.50</div>
<div class="t" style="left:136.95px;letter-spacing:-0.347px;top:577.50px;font-size:8px;line-height:12px;color:#222;">-1.00</div>
<div class="t" style="left:185.35px;letter-spacing:-0.347px;top:577.50px;font-size:8px;line-height:12px;color:#222;">-0.50</div>
<div class="t" style="left:235.25px;letter-spacing:-0.520px;top:577.50px;font-size:8px;line-height:12px;color:#222;">0.00</div>
<div class="t" style="left:283.65px;letter-spacing:-0.520px;top:577.50px;font-size:8px;line-height:12px;color:#222;">0.50</div>
<div class="t" style="left:332.05px;letter-spacing:-0.520px;top:577.50px;font-size:8px;line-height:12px;color:#222;">1.00</div>
<div class="t" style="left:380.45px;letter-spacing:-0.520px;top:577.50px;font-size:8px;line-height:12px;color:#222;">1.50</div>
<div class="t" style="left:238.88px;top:588.00px;font-size:8px;line-height:12px;color:#222;">in</div>
<div class="a" style="left:1080px;top:149px;width:453px;height:459px;background:linear-gradient(#e9ebf4 0%,#e3e6f0 45%,#c4c7da 75%,#afb2cb 100%);border:1px solid #b4b4b4;box-shadow:inset 1px 1px 0 #e4e4ea,inset -1px -1px 0 #e4e4ea"></div>
<div class="a" style="left:1082px;top:150px;width:1450px;height:0px;"></div>
<div class="a" style="left:1082px;top:150px;width:449px;height:123px;background:#fff;border:1px solid #999;border-bottom:none"></div>
<div class="a" style="left:1083px;top:169px;width:447px;height:1px;background:#ececec"></div>
<div class="t" style="left:1141.00px;letter-spacing:-0.051px;top:152.60px;font-size:12px;line-height:16px;color:#000;">Project</div>
<div class="a" style="left:1083px;top:188px;width:447px;height:1px;background:#ececec"></div>
<div class="t" style="left:1149.50px;letter-spacing:-0.836px;top:171.60px;font-size:12px;line-height:16px;color:#000;">Size</div>
<div class="t" style="left:1331.25px;letter-spacing:-0.209px;top:171.60px;font-size:12px;line-height:16px;color:#000;">3.87 &quot;(w) x 2.28 &quot;(h)</div>
<div class="a" style="left:1083px;top:207px;width:447px;height:1px;background:#ececec"></div>
<div class="t" style="left:1125.00px;letter-spacing:-0.170px;top:190.60px;font-size:12px;line-height:16px;color:#000;">Total Stitches</div>
<div class="t" style="left:1370.50px;letter-spacing:-0.926px;top:190.60px;font-size:12px;line-height:16px;color:#000;">7171</div>
<div class="a" style="left:1083px;top:226px;width:447px;height:1px;background:#ececec"></div>
<div class="t" style="left:1141.00px;letter-spacing:0.273px;top:209.60px;font-size:12px;line-height:16px;color:#000;">Author</div>
<div class="a" style="left:1083px;top:245px;width:447px;height:1px;background:#ececec"></div>
<div class="t" style="left:1133.00px;letter-spacing:0.182px;top:228.60px;font-size:12px;line-height:16px;color:#000;">Copyright</div>
<div class="a" style="left:1083px;top:264px;width:447px;height:1px;background:#ececec"></div>
<div class="t" style="left:1117.75px;letter-spacing:-0.188px;top:247.60px;font-size:12px;line-height:16px;color:#000;">Color File (read)</div>
<div class="t" style="left:1337.50px;letter-spacing:-0.230px;top:247.60px;font-size:12px;line-height:16px;color:#000;">littlesisterbib.PES</div>
<div class="a" style="left:1233px;top:151px;width:1px;height:121px;background:#ececec"></div>
<div class="a" style="left:1082px;top:272px;width:449px;height:2px;background:#6b6b6b"></div>
<div class="a" style="left:1082px;top:274px;width:449px;height:80px;background:#fff;border:1px solid #999;border-top:none"></div>
<div class="a" style="left:1131px;top:274px;width:1px;height:78px;background:#e6e6e6"></div>
<div class="a" style="left:1223px;top:274px;width:1px;height:78px;background:#e6e6e6"></div>
<div class="a" style="left:1321px;top:274px;width:1px;height:78px;background:#e6e6e6"></div>
<div class="a" style="left:1364px;top:274px;width:1px;height:78px;background:#e6e6e6"></div>
<div class="a" style="left:1426px;top:274px;width:1px;height:78px;background:#e6e6e6"></div>
<div class="a" style="left:1504px;top:274px;width:1px;height:78px;background:#e6e6e6"></div>
<div class="a" style="left:1083px;top:298px;width:447px;height:1px;background:#ececec"></div>
<div class="a" style="left:1083px;top:316px;width:447px;height:1px;background:#ececec"></div>
<div class="a" style="left:1083px;top:335px;width:447px;height:1px;background:#ececec"></div>
<div class="t" style="left:1092.10px;letter-spacing:0.163px;top:278.00px;font-size:12px;line-height:16px;color:#000;">Color</div>
<div class="t" style="left:1141.60px;letter-spacing:-0.261px;top:278.00px;font-size:12px;line-height:16px;color:#000;">Thread Name</div>
<div class="t" style="left:1256.35px;letter-spacing:-0.206px;top:278.00px;font-size:12px;line-height:16px;color:#000;">Brand</div>
<div class="t" style="left:1338.95px;letter-spacing:-0.188px;top:278.00px;font-size:12px;line-height:16px;color:#000;">#</div>
<div class="t" style="left:1374.30px;letter-spacing:-0.211px;top:278.00px;font-size:12px;line-height:16px;color:#000;">Stitches</div>
<div class="t" style="left:1437.90px;letter-spacing:0.283px;top:278.00px;font-size:12px;line-height:16px;color:#000;">Comment</div>
<div class="t" style="left:1151.35px;letter-spacing:-0.410px;top:298.20px;font-size:12px;line-height:16px;color:#000;">Dark Gray</div>
<div class="t" style="left:1239.10px;letter-spacing:-0.044px;top:298.20px;font-size:12px;line-height:16px;color:#000;">Brother Poly</div>
<div class="t" style="left:1333.20px;letter-spacing:-0.677px;top:298.20px;font-size:12px;line-height:16px;color:#000;">707</div>
<div class="t" style="left:1382.55px;letter-spacing:-0.551px;top:298.20px;font-size:12px;line-height:16px;color:#000;">3277</div>
<div class="t" style="left:1163.35px;letter-spacing:-0.738px;top:317.20px;font-size:12px;line-height:16px;color:#000;">Brass</div>
<div class="t" style="left:1239.10px;letter-spacing:-0.044px;top:317.20px;font-size:12px;line-height:16px;color:#000;">Brother Poly</div>
<div class="t" style="left:1333.20px;letter-spacing:-0.677px;top:317.20px;font-size:12px;line-height:16px;color:#000;">328</div>
<div class="t" style="left:1382.55px;letter-spacing:-0.551px;top:317.20px;font-size:12px;line-height:16px;color:#000;">3894</div>
<div class="a" style="left:1089px;top:298px;width:36px;height:18px;background:#2d3437;border:1px solid #1c2022;border-radius:6px"></div>
<div class="a" style="left:1089px;top:317.5px;width:36px;height:18px;background:#bb9704;border:1px solid #1c1c1c;border-radius:6px"></div>
<div class="t" style="left:1103.66px;top:298.70px;font-size:12px;line-height:16px;color:#fff;">1</div>
<div class="t" style="left:1103.66px;top:317.70px;font-size:12px;line-height:16px;color:#111;">2</div>
<div class="a" style="left:1080px;top:611px;width:453px;height:189px;background:linear-gradient(#f2f4fb 0%,#eef0f8 25%,#d5d8e8 60%,#b9bcd3 90%,#b2b5ce 100%);border:1px solid #b4b4b4;box-shadow:inset 1px 1px 0 #e4e4ea,inset -1px -1px 0 #e4e4ea"></div>
<svg class="a" style="left:0px;top:0px;" width="1536" height="864" viewBox="0 0 1536 864" preserveAspectRatio="none"><defs><linearGradient id="br" x1="0" y1="0" x2="1" y2="0"><stop offset="0" stop-color="#f40000"/><stop offset="1" stop-color="#d80000"/></linearGradient><linearGradient id="bd" x1="0" y1="0" x2="1" y2="0"><stop offset="0" stop-color="#b00000"/><stop offset="1" stop-color="#8a0000"/></linearGradient></defs><rect x="1148.00" y="752.17" width="3.17" height="16.03" fill="url(#br)"/><rect x="1151.17" y="696.00" width="3.00" height="72.20" fill="url(#br)"/><rect x="1155.00" y="727.17" width="3.00" height="41.03" fill="url(#bd)"/><rect x="1158.00" y="717.17" width="3.17" height="51.03" fill="url(#br)"/><rect x="1161.17" y="714.00" width="3.00" height="54.20" fill="url(#br)"/><rect x="1164.17" y="701.00" width="3.00" height="67.20" fill="url(#br)"/><rect x="1168.33" y="709.00" width="2.83" height="59.20" fill="url(#bd)"/><rect x="1171.17" y="691.00" width="3.00" height="77.20" fill="url(#br)"/><rect x="1174.17" y="683.17" width="3.00" height="85.03" fill="url(#br)"/><rect x="1177.17" y="643.00" width="2.83" height="125.20" fill="url(#br)"/><rect x="1181.17" y="686.00" width="3.00" height="82.20" fill="url(#bd)"/><rect x="1184.17" y="696.00" width="3.00" height="72.20" fill="url(#bd)"/><rect x="1187.17" y="687.17" width="2.83" height="81.03" fill="url(#br)"/><rect x="1191.17" y="684.17" width="3.00" height="84.03" fill="url(#br)"/><rect x="1194.17" y="703.00" width="3.00" height="65.20" fill="url(#bd)"/><rect x="1197.17" y="692.17" width="2.83" height="76.03" fill="url(#bd)"/><rect x="1200.00" y="706.00" width="3.00" height="62.20" fill="url(#br)"/><rect x="1204.17" y="700.00" width="2.83" height="68.20" fill="url(#br)"/><rect x="1207.00" y="704.00" width="3.00" height="64.20" fill="url(#bd)"/><rect x="1210.00" y="672.00" width="3.00" height="96.20" fill="url(#bd)"/><rect x="1213.00" y="744.00" width="3.00" height="24.20" fill="url(#br)"/><rect x="1217.17" y="747.17" width="2.83" height="21.03" fill="url(#br)"/><rect x="1220.00" y="747.17" width="3.00" height="21.03" fill="url(#bd)"/><rect x="1223.00" y="754.17" width="3.00" height="14.03" fill="url(#br)"/><rect x="1227.17" y="756.00" width="2.83" height="12.20" fill="url(#br)"/><rect x="1230.00" y="756.00" width="3.00" height="12.20" fill="url(#br)"/><rect x="1233.00" y="749.17" width="3.00" height="19.03" fill="url(#bd)"/><rect x="1236.00" y="740.17" width="3.00" height="28.03" fill="url(#bd)"/><rect x="1240.00" y="749.17" width="3.00" height="19.03" fill="url(#br)"/><rect x="1243.00" y="661.83" width="3.17" height="106.37" fill="url(#br)"/><rect x="1246.17" y="699.00" width="2.83" height="69.20" fill="url(#bd)"/><rect x="1253.33" y="767.17" width="8.33" height="1.03" fill="url(#br)"/><rect x="1279.17" y="767.17" width="2.83" height="1.03" fill="url(#br)"/><path d="M1138.7 643.3V768.3H1480" stroke="#111" stroke-width="1.3" fill="none"/><path d="M1138.7 643.3H1144.5M1138.7 705.4H1144.5" stroke="#111" stroke-width="1.2"/><path d="M1142.4 762.5V768.3" stroke="#111" stroke-width="1.2"/><path d="M1168.4 762.5V768.3" stroke="#111" stroke-width="1.2"/><path d="M1194.4 762.5V768.3" stroke="#111" stroke-width="1.2"/><path d="M1220.4 762.5V768.3" stroke="#111" stroke-width="1.2"/><path d="M1246.4 762.5V768.3" stroke="#111" stroke-width="1.2"/><path d="M1272.4 762.5V768.3" stroke="#111" stroke-width="1.2"/><path d="M1298.4 762.5V768.3" stroke="#111" stroke-width="1.2"/><path d="M1324.4 762.5V768.3" stroke="#111" stroke-width="1.2"/><path d="M1350.4 762.5V768.3" stroke="#111" stroke-width="1.2"/><path d="M1376.4 762.5V768.3" stroke="#111" stroke-width="1.2"/><path d="M1402.4 762.5V768.3" stroke="#111" stroke-width="1.2"/><path d="M1428.4 762.5V768.3" stroke="#111" stroke-width="1.2"/><path d="M1454.4 762.5V768.3" stroke="#111" stroke-width="1.2"/><path d="M1480.4 762.5V768.3" stroke="#111" stroke-width="1.2"/></svg>
<div class="t" style="left:1244.50px;letter-spacing:-0.079px;top:619.40px;font-size:16px;line-height:20px;color:#222;">Stitch Distribution</div>
<div class="t" style="left:1270.00px;letter-spacing:-0.318px;top:778.50px;font-size:16px;line-height:20px;color:#222;">Length (in)</div>
<div class="t" style="left:1134.95px;letter-spacing:-0.277px;top:770.55px;font-size:7.5px;line-height:11.5px;color:#222;">0.00</div>
<div class="t" style="left:1160.95px;letter-spacing:-0.277px;top:770.55px;font-size:7.5px;line-height:11.5px;color:#222;">0.04</div>
<div class="t" style="left:1186.95px;letter-spacing:-0.277px;top:770.55px;font-size:7.5px;line-height:11.5px;color:#222;">0.08</div>
<div class="t" style="left:1212.95px;letter-spacing:-0.277px;top:770.55px;font-size:7.5px;line-height:11.5px;color:#222;">0.12</div>
<div class="t" style="left:1238.95px;letter-spacing:-0.277px;top:770.55px;font-size:7.5px;line-height:11.5px;color:#222;">0.16</div>
<div class="t" style="left:1264.95px;letter-spacing:-0.277px;top:770.55px;font-size:7.5px;line-height:11.5px;color:#222;">0.20</div>
<div class="t" style="left:1290.95px;letter-spacing:-0.277px;top:770.55px;font-size:7.5px;line-height:11.5px;color:#222;">0.24</div>
<div class="t" style="left:1316.95px;letter-spacing:-0.277px;top:770.55px;font-size:7.5px;line-height:11.5px;color:#222;">0.28</div>
<div class="t" style="left:1342.95px;letter-spacing:-0.277px;top:770.55px;font-size:7.5px;line-height:11.5px;color:#222;">0.31</div>
<div class="t" style="left:1368.95px;letter-spacing:-0.277px;top:770.55px;font-size:7.5px;line-height:11.5px;color:#222;">0.35</div>
<div class="t" style="left:1394.95px;letter-spacing:-0.277px;top:770.55px;font-size:7.5px;line-height:11.5px;color:#222;">0.39</div>
<div class="t" style="left:1420.95px;letter-spacing:-0.277px;top:770.55px;font-size:7.5px;line-height:11.5px;color:#222;">0.43</div>
<div class="t" style="left:1446.95px;letter-spacing:-0.277px;top:770.55px;font-size:7.5px;line-height:11.5px;color:#222;">0.47</div>
<div class="t" style="left:1472.95px;letter-spacing:-0.277px;top:770.55px;font-size:7.5px;line-height:11.5px;color:#222;">0.51</div>
<div class="t" style="left:1105.5px;top:705px;font-size:16px;line-height:18px;color:#222;transform:translate(-50%,-50%) rotate(-90deg)">Number</div>
<div class="t" style="left:1128.5px;top:644px;font-size:7.5px;line-height:9px;color:#222;letter-spacing:-0.3px;transform:translate(-50%,-50%) rotate(-90deg)">518</div>
<div class="t" style="left:1128.5px;top:705.5px;font-size:7.5px;line-height:9px;color:#222;letter-spacing:-0.3px;transform:translate(-50%,-50%) rotate(-90deg)">259</div>
<div class="t" style="left:1128.5px;top:767.5px;font-size:7.5px;line-height:9px;color:#222;letter-spacing:-0.3px;transform:translate(-50%,-50%) rotate(-90deg)">0</div>
<div class="a" style="left:123px;top:44px;width:221px;height:380.5px;background:#fcfcfc;border:solid #979797;border-width:1px 2px 1.5px 1px;box-shadow:2px 2px 1px rgba(60,60,90,.28)"></div>
<div class="a" style="left:124px;top:45px;width:24px;height:378px;background:#f1f1f1;border-right:1px solid #e0e0e0"></div>
<div class="a" style="left:148px;top:45px;width:1px;height:378px;background:#fff"></div>
<div class="a" style="left:126px;top:134px;width:215px;height:22px;border:1px solid #a9d3f2;border-radius:3px;background:linear-gradient(#e9f4fc 0%,#d6eafa 50%,#c4e0f8 100%)"></div>
<div class="t" style="left:153.00px;top:48.50px;font-size:12px;line-height:16px;color:#111;">Add Border</div>
<div class="t" style="left:301.48px;top:48.50px;font-size:12px;line-height:16px;color:#111;">Alt+B</div>
<div class="t" style="left:153.00px;top:70.50px;font-size:12px;line-height:16px;color:#111;">Add Nap-Tack Stitches</div>
<div class="t" style="left:153.00px;top:92.50px;font-size:12px;line-height:16px;color:#111;">Adjust Density</div>
<div class="t" style="left:296.81px;top:92.50px;font-size:12px;line-height:16px;color:#111;">Ctrl+A</div>
<div class="t" style="left:153.00px;top:114.50px;font-size:12px;line-height:16px;color:#111;">Applique Cutter</div>
<div class="t" style="left:153.00px;top:136.50px;font-size:12px;line-height:16px;color:#111;">Basting Stitch</div>
<div class="t" style="left:153.00px;top:158.50px;font-size:12px;line-height:16px;color:#111;">Batch Convert</div>
<div class="t" style="left:296.81px;top:158.50px;font-size:12px;line-height:16px;color:#111;">Ctrl+B</div>
<div class="t" style="left:153.00px;top:180.50px;font-size:12px;line-height:16px;color:#111;">Center Pattern</div>
<div class="t" style="left:300.81px;top:180.50px;font-size:12px;line-height:16px;color:#111;">Alt+C</div>
<div class="t" style="left:153.00px;top:202.50px;font-size:12px;line-height:16px;color:#111;">Resize Pattern</div>
<div class="t" style="left:296.16px;top:202.50px;font-size:12px;line-height:16px;color:#111;">Ctrl+R</div>
<div class="t" style="left:153.00px;top:232.50px;font-size:12px;line-height:16px;color:#111;">Media Writer</div>
<div class="t" style="left:299.48px;top:232.50px;font-size:12px;line-height:16px;color:#111;">Alt+M</div>
<div class="t" style="left:153.00px;top:254.50px;font-size:12px;line-height:16px;color:#111;">Write D1 Media</div>
<div class="t" style="left:300.81px;top:254.50px;font-size:12px;line-height:16px;color:#111;">Alt+D</div>
<div class="t" style="left:153.00px;top:284.50px;font-size:12px;line-height:16px;color:#8c8c8c;">Align Text</div>
<div class="t" style="left:153.00px;top:306.50px;font-size:12px;line-height:16px;color:#111;">Emb Lettering</div>
<div class="t" style="left:153.00px;top:328.50px;font-size:12px;line-height:16px;color:#111;">Sew Lettering</div>
<div class="t" style="left:298.16px;top:328.50px;font-size:12px;line-height:16px;color:#111;">Ctrl+L</div>
<div class="t" style="left:153.00px;top:350.50px;font-size:12px;line-height:16px;color:#8c8c8c;">Text Layout</div>
<div class="t" style="left:153.00px;top:372.50px;font-size:12px;line-height:16px;color:#8c8c8c;">Warp Text</div>
<div class="t" style="left:153.00px;top:402.50px;font-size:12px;line-height:16px;color:#111;">Fabric</div>
<div class="t" style="left:297.50px;top:402.50px;font-size:12px;line-height:16px;color:#111;">Ctrl+F</div>
<div class="a" style="left:158px;top:225px;width:184px;height:1px;background:#dcdcdc"></div>
<div class="a" style="left:158px;top:226px;width:184px;height:1px;background:#fff"></div>
<div class="a" style="left:158px;top:277px;width:184px;height:1px;background:#dcdcdc"></div>
<div class="a" style="left:158px;top:278px;width:184px;height:1px;background:#fff"></div>
<div class="a" style="left:158px;top:395px;width:184px;height:1px;background:#dcdcdc"></div>
<div class="a" style="left:158px;top:396px;width:184px;height:1px;background:#fff"></div>
<svg class="a" style="left:127.2px;top:48.2px;" width="16.5" height="16.5" viewBox="0 0 24 24" preserveAspectRatio="none"><circle cx="12" cy="12" r="10.400" fill="none" stroke="#f78383" stroke-width="2.600" stroke-linecap="round" stroke-dasharray="0.100 4.570"/><circle cx="12" cy="12" r="9.600" fill="#fbf6f8" stroke="#f78383" stroke-width="1.300"/><text x="12.200" y="17" font-family="'Liberation Sans',sans-serif" font-weight="bold" font-size="13.500" text-anchor="middle" fill="#3fbfd2">B</text></svg>
<svg class="a" style="left:128.4px;top:93.2px;" width="15.3" height="15" viewBox="0 0 24 22" preserveAspectRatio="none"><rect x="0" y="0" width="24" height="22" fill="#000"/><rect x="1.500" y="1.500" width="8.500" height="20.500" fill="#008000"/><rect x="10" y="1.500" width="8" height="20.500" fill="#00ff00"/><rect x="18" y="1.500" width="6" height="20.500" fill="#ffff00"/></svg>
<svg class="a" style="left:132.8px;top:116.3px;" width="6" height="13.5" viewBox="0 0 8 21" preserveAspectRatio="none"><path d="M1 1.200Q1 .5 1.800 .5H6.200Q7 .5 7 1.200V11.500L5.500 14H2.500L1 11.500z" fill="#7fc4f8" stroke="#41586e" stroke-width="1"/><path d="M2.300 14H5.700L4 20.500z" fill="#222"/></svg>
<svg class="a" style="left:128.7px;top:158.8px;" width="14.6" height="15.8" viewBox="0 0 20 22" preserveAspectRatio="none"><g stroke="#7aa7d9" stroke-width=".9"><path d="M6.500 1.500L16.500 .8V18L6.500 18.800z" fill="#dfeefb"/><path d="M10 2.500L19.500 1.800V17L16.500 20L10 19.500z" fill="#cfe4f8"/><path d="M1 5.500L11 4V21.500L1 20.500z" fill="#e6f1fc"/><path d="M11 4L14.500 3V19.500L11 21.500z" fill="#b8d4f0"/></g></svg>
<svg class="a" style="left:129.2px;top:182.6px;" width="12.6" height="12.6" viewBox="0 0 18.5 18.5" preserveAspectRatio="none"><rect x="0" y="0" width="18.500" height="18.500" fill="#111"/><rect x="1" y="1" width="7" height="7" fill="#ff0000"/><rect x="10.500" y="1" width="7" height="7" fill="#ff0000"/><rect x="1" y="10.500" width="7" height="7" fill="#ff0000"/><rect x="10.500" y="10.500" width="7" height="7" fill="#ff0000"/><rect x="8.200" y="0" width="2.100" height="18.500" fill="#fff"/><rect x="-1.500" y="8.100" width="21.500" height="2.300" fill="#fff"/></svg>
<svg class="a" style="left:128px;top:203.7px;" width="15.3" height="14.6" viewBox="0 0 22 21" preserveAspectRatio="none"><defs><pattern id="chk" width="3" height="3" patternUnits="userSpaceOnUse"><rect width="3" height="3" fill="#cfe6fc"/><rect width="1.500" height="1.500" fill="#b9d9f8"/><rect x="1.500" y="1.500" width="1.500" height="1.500" fill="#b9d9f8"/></pattern></defs><rect x="2" y="2" width="18" height="17" fill="url(#chk)" stroke="#2f5f94" stroke-width="1.200"/><path d="M0 0H6L0 6zM22 0H16L22 6zM0 21H6L0 15zM22 21H16L22 15z" fill="#5b9bd8"/><path d="M3 3L6.500 6.500M19 3L15.500 6.500M3 18L6.500 14.500M19 18L15.500 14.500" stroke="#6aa5de" stroke-width="1.600"/><path d="M4 20.600H18" stroke="#1c2a3c" stroke-width="1.300"/></svg>
<svg class="a" style="left:129.6px;top:233.4px;" width="13.7" height="14.6" viewBox="0 0 20 22" preserveAspectRatio="none"><path d="M0 0H16L20 3.500V22H0z" fill="#3b3b3b"/><rect x="3" y="2.500" width="13.500" height="8.500" rx="1" fill="#e9b500"/><path d="M3 5.300H16.500M3 8.200H16.500M7.500 2.500V11M12 2.500V11" stroke="#c99700" stroke-width=".7"/><rect x="3" y="13" width="11" height="2" fill="#6a7c90"/><rect x="2" y="17" width="14" height="5" fill="#2a2a2a"/><text x="9" y="22" font-family="'Liberation Sans',sans-serif" font-weight="bold" font-size="7" text-anchor="middle" fill="#ffff00" textLength="12" lengthAdjust="spacingAndGlyphs">SM</text></svg>
<svg class="a" style="left:127.2px;top:255.2px;" width="16.5" height="14.6" viewBox="0 0 24 22" preserveAspectRatio="none"><defs><linearGradient id="pf" x1="0" y1="0" x2="1" y2="0"><stop offset="0" stop-color="#a47fd6"/><stop offset=".5" stop-color="#9a6ccf"/><stop offset="1" stop-color="#7e54b8"/></linearGradient></defs><rect x="0" y="0" width="24" height="22" rx="1" fill="url(#pf)"/><rect x="3" y="1" width="17.500" height="12" fill="#f6f8ff"/><path d="M3 4H20.500M3 7H20.500M3 10H20.500" stroke="#d5daf0" stroke-width=".6"/><text x="11.800" y="10.500" font-family="'Liberation Sans',sans-serif" font-size="9.500" text-anchor="middle" fill="#6f90d8">D1</text><rect x="5.500" y="15.500" width="12.500" height="6.500" fill="#d9d9d9"/><rect x="7.500" y="16.500" width="3" height="5.500" fill="#8b62c4"/></svg>
<svg class="a" style="left:128px;top:403.5px;" width="16.2" height="14.5" viewBox="0 0 24 20.5" preserveAspectRatio="none"><defs><linearGradient id="ts" x1="0" y1="0" x2="0" y2="1"><stop offset="0" stop-color="#2db4ea"/><stop offset="1" stop-color="#16789c"/></linearGradient></defs><path d="M7.500 .5Q12 3.500 16.500 .5L24 4.500L21 9.500L18.200 8.300V20.300H5.800V8.300L3 9.500L0 4.500z" fill="url(#ts)"/><path d="M7.500 .5Q12 4.800 16.500 .5L15.300 .2Q12 3 8.700 .2z" fill="#d9dee2"/></svg>
<div class="a" style="left:0px;top:824px;width:1536px;height:40px;background:linear-gradient(90deg,#3b3e46 0,#3f4247 4%,#3f4246 48%,#3a3d43 58%,#31353b 72%,#2c3037 100%)"></div>
<div class="a" style="left:48px;top:824px;width:344px;height:40px;background:#f2f2f2;border-top:1px solid #cfcfcf;border-bottom:1px solid #d8d8d8"></div>
<svg class="a" style="left:15px;top:835px;" width="18" height="18" viewBox="0 0 18 18" preserveAspectRatio="none"><path d="M0.8 3.1L7.3 2.2V8.3H0.8zM8.3 2.05L17.2 0.8V8.3H8.3zM0.8 9.3H7.3V15.4L0.8 14.5zM8.3 9.3H17.2V16.9L8.3 15.6z" fill="#fff"/></svg>
<svg class="a" style="left:58px;top:833px;" width="22" height="22" viewBox="0 0 22 22" preserveAspectRatio="none"><circle cx="12.7" cy="8.3" r="5" fill="none" stroke="#222" stroke-width="1.3"/><path d="M9.3 12.2L2.3 18.6" stroke="#222" stroke-width="1.4" stroke-linecap="round"/></svg>
<div class="t" style="left:88.30px;letter-spacing:0.096px;top:835.05px;font-size:14.5px;line-height:18.5px;color:#2e2e2e;">Type here to search</div>
<svg class="a" style="left:406px;top:834px;" width="20" height="20" viewBox="0 0 20 20" preserveAspectRatio="none"><circle cx="10" cy="10" r="6.9" fill="none" stroke="#fff" stroke-width="2"/></svg>
<svg class="a" style="left:454px;top:834px;" width="20" height="20" viewBox="0 0 20 20" preserveAspectRatio="none"><g fill="none" stroke="#fff" stroke-width="1.1"><rect x="3.3" y="4.6" width="8.6" height="9.8"/><path d="M2.2 2.5H13M2.2 16.6H13M2.2 2v2M13 2v2M2.2 15v2M13 15v2M16.6 2V7M16.6 9.5V17.2"/></g><rect x="15.9" y="7.4" width="1.6" height="1.6" fill="#fff"/></svg>
<div class="a" style="left:495px;top:861.5px;width:34px;height:3px;background:#76b9ed"></div>
<div class="a" style="left:529px;top:861.5px;width:7px;height:3px;background:#5f95c3"></div>
<div class="a" style="left:644px;top:861.5px;width:41px;height:3px;background:#76b9ed"></div>
<div class="a" style="left:690px;top:824px;width:48.5px;height:40px;background:#686b6f"></div>
<div class="a" style="left:690px;top:861.5px;width:48.5px;height:3px;background:#76b9ed"></div>
<svg class="a" style="left:503px;top:833px;" width="25" height="21" viewBox="0 0 25 21" preserveAspectRatio="none"><path d="M1 2.2h8.5l1.5 1.8H23V19H1z" fill="#ffd964"/><path d="M1 2.2a1 1 0 0 1 1-1h7a1 1 0 0 1 .9.5L11 4H1z" fill="#efa500"/><path d="M1 6h22V19H1z" fill="#ffd964"/><path d="M5.5 12h13a1 1 0 0 1 1 1v6.3H16.5V15H7.5v4.3H4.5V13a1 1 0 0 1 1-1z" fill="#3c98e0"/><path d="M1 18h22v1H1z" fill="#f1b838"/></svg>
<svg class="a" style="left:552px;top:831px;" width="26" height="26" viewBox="0 0 26 26" preserveAspectRatio="none"><defs><linearGradient id="ed1" x1="0" y1="0" x2="1" y2="1"><stop offset="0" stop-color="#2bc3d2"/><stop offset=".6" stop-color="#35c1a0"/><stop offset="1" stop-color="#6bd04a"/></linearGradient><linearGradient id="ed2" x1="0" y1="0" x2="0" y2="1"><stop offset="0" stop-color="#1b9de2"/><stop offset="1" stop-color="#0c59a4"/></linearGradient></defs><circle cx="13" cy="13" r="12.2" fill="url(#ed2)"/><path d="M1 11.5C2 4.5 7.5 0.8 13 0.8c6.5 0 12 4.6 12.2 10.5c.1 3.6-2.600 5.7-5.7 5.7c-2.600 0-4-1.200-4-2.500c0-1.100.9-1.500.9-3c0-2-2.200-3.700-5-3.700C6.500 7.800 2.500 9 1 11.500z" fill="url(#ed1)"/><path d="M9.500 13.500c-.800 2-.400 4.300.700 6.300c1.500 2.700 4.500 4.500 7.500 4.700c-2 1-4 1-5.500.600C7 24 3.500 20 3.500 15.500c0-2 .800-3.800 2.200-5c1.500-1.200 3.300-1.500 4.800-1.200c-1 .9-.8 2.700-1 4.200z" fill="#0b4f94" opacity=".75"/></svg>
<svg class="a" style="left:602px;top:831px;" width="25" height="25" viewBox="0 0 25 25" preserveAspectRatio="none"><defs><radialGradient id="ff1" cx=".5" cy=".25" r=".8"><stop offset="0" stop-color="#fff36b"/><stop offset=".35" stop-color="#ffbd2e"/><stop offset=".7" stop-color="#ff6a2a"/><stop offset="1" stop-color="#e31587"/></radialGradient><radialGradient id="ff2" cx=".5" cy=".5" r=".5"><stop offset="0" stop-color="#7a3fe0"/><stop offset="1" stop-color="#5a2bbd"/></radialGradient></defs><path d="M12.500 3c1.500-.5 2.500-1.800 2.700-3c2.300 1.800 4.300 4.300 5.300 6.500c1.500 1 3 3.500 3.200 6.500c.3 6-4.500 11.300-11.200 11.300C6 24.300 1 19.500 1 13.500c0-3 1-5.500 2.600-7c0 .8.200 1.700.600 2.300c.5-2 2-4 4-5c-.2 1 .2 2 .8 2.600C10 5 11 3.500 12.500 3z" fill="url(#ff1)"/><circle cx="12" cy="13.500" r="4.800" fill="url(#ff2)"/><path d="M6 9c2-1.500 5-1.500 6.500.3c-2 .2-3 1.200-3.200 2.500c-1.300-.3-2.600-1.300-3.300-2.800z" fill="#ff9a2a"/></svg>
<svg class="a" style="left:652px;top:832px;" width="24" height="24" viewBox="0 0 24 24" preserveAspectRatio="none"><circle cx="12" cy="12" r="11.300" fill="#fff"/><path d="M12 12L2.210 6.350A11.300 11.300 0 0 1 21.790 6.350z" fill="#db4437"/><path d="M12 .7A11.300 11.300 0 0 1 21.790 6.350H12z" fill="#db4437"/><path d="M21.790 6.350A11.300 11.300 0 0 1 12 23.300L16.900 12L12 6.350z" fill="#ffcd40"/><path d="M12 23.300A11.300 11.300 0 0 1 2.210 6.350L7.100 14.850L12 17.650z" fill="#0f9d58"/><path d="M12 23.300L16.900 14.830L12 17.650z" fill="#ffcd40"/><path d="M2.210 6.350L7.100 14.830L12 12L12 6.350z" fill="#0f9d58" opacity="0"/><circle cx="12" cy="12" r="5.300" fill="#f1f1f1"/><circle cx="12" cy="12" r="4.200" fill="#4285f4"/></svg>
<svg class="a" style="left:702px;top:835px;" width="24" height="20" viewBox="0 0 24 20" preserveAspectRatio="none"><path d="M2.500 3.500Q2.500 1.500 4.500 1.500H19Q21.500 1.500 21.500 4V14H23V18.500H1V14H6.500V8.500H2.500z" fill="#dcdcdc" stroke="#111" stroke-width="1.100"/><rect x="1.500" y="14.500" width="21" height="1.200" fill="#fff"/><rect x="8.500" y="8.500" width="5" height="5.500" fill="#e8d800"/><circle cx="17" cy="5" r="1.700" fill="#fff" stroke="#111" stroke-width=".8"/><circle cx="16.500" cy="10.500" r="1" fill="#111"/><path d="M5 3.500h7M9 4v-3" stroke="#111" stroke-width=".9"/></svg>
<svg class="a" style="left:1320px;top:838px;" width="16" height="11" viewBox="0 0 16 11" preserveAspectRatio="none"><path d="M1.700 9.300L8 3L14.300 9.300" fill="none" stroke="#fff" stroke-width="1.300"/></svg>
<svg class="a" style="left:1351px;top:836px;" width="18" height="16" viewBox="0 0 18 16" preserveAspectRatio="none"><g fill="none" stroke="#fff" stroke-width="1.100"><path d="M1.300 5.800H4L7.500 2.500V13.500L4 10.200H1.300z"/><path d="M9.800 6.200a2.600 2.600 0 0 1 0 3.600"/><path d="M11.800 4.300a5.300 5.300 0 0 1 0 7.400" opacity=".8"/><path d="M13.900 2.600a8 8 0 0 1 0 10.800" opacity=".45"/></g></svg>
<svg class="a" style="left:1387px;top:835px;" width="18" height="18" viewBox="0 0 18 18" preserveAspectRatio="none"><g fill="none" stroke="#fff" stroke-width="1.200"><path d="M6.300 14.500L11.800 3.800a1.700 1.700 0 0 1 3 1.500L9.300 16z"/><path d="M6.300 14.500L5.800 17l3.500-1"/><path d="M6.800 10.300c-2.800-.3-5 1.500-4.600 3.600c.3 1.500 2 2 3.300 1.300"/><path d="M13.300 8.500c1.600.3 2.600 1.200 2.500 2.300c-.1.900-.9 1.400-1.900 1.300"/></g></svg>
<div class="t" style="left:1428.80px;letter-spacing:-0.500px;top:827.00px;font-size:12px;line-height:16px;color:#fff;">9:47 PM</div>
<div class="t" style="left:1423.25px;letter-spacing:-0.099px;top:845.80px;font-size:12px;line-height:16px;color:#fff;">1/15/2021</div>
<svg class="a" style="left:1494px;top:835px;" width="18" height="18" viewBox="0 0 18 18" preserveAspectRatio="none"><path d="M1.500 1.500H16.700V13H11L9 15.300L7 13H1.500z" fill="none" stroke="#fff" stroke-width="1.200"/></svg>
<div class="a" style="left:1531px;top:824px;width:1px;height:40px;background:#5a5d63"></div>
</body></html>
